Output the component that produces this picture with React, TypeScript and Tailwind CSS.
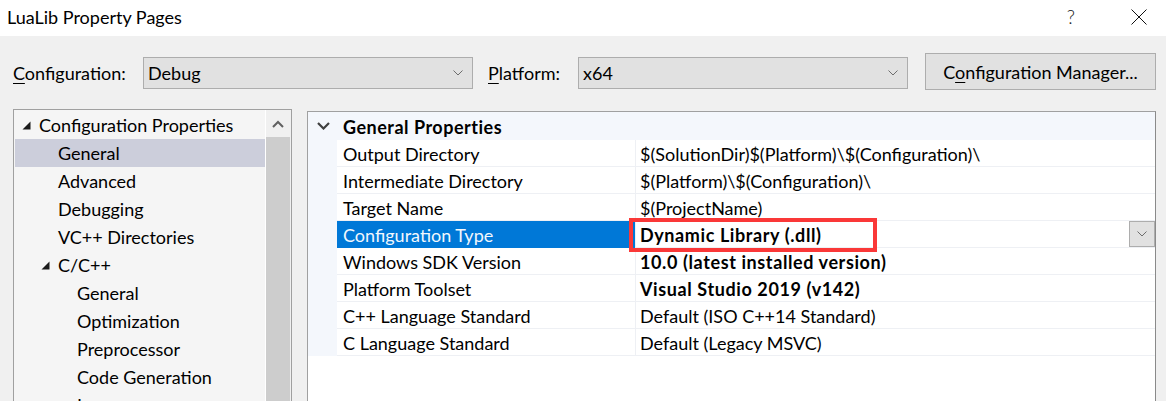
import React from "react";

function SmallChevron() {
  return (
    <svg width="10" height="6" viewBox="0 0 10 6" className="shrink-0">
      <path d="M0.5 0.5 L5 5 L9.5 0.5" fill="none" stroke="#6d6d6d" strokeWidth="1" />
    </svg>
  );
}

function Combo({ value }: { value: string }) {
  return (
    <div className="mt-[4px] w-[330px] h-[32px] bg-[#e1e1e1] border border-[#adadad] flex items-center pl-[4px] pr-[9px]">
      <span className="flex-1">{value}</span>
      <SmallChevron />
    </div>
  );
}

function TreeTriangle() {
  return (
    <svg width="9" height="9" viewBox="0 0 9 9" className="shrink-0">
      <path d="M8.5 0.5 L8.5 8.5 L0.5 8.5 Z" fill="#1a1a1a" />
    </svg>
  );
}

type TreeItem = { label: string; level: number; expand?: boolean; selected?: boolean };

const treeItems: TreeItem[] = [
  { label: "Configuration Properties", level: 0, expand: true },
  { label: "General", level: 1, selected: true },
  { label: "Advanced", level: 1 },
  { label: "Debugging", level: 1 },
  { label: "VC++ Directories", level: 1 },
  { label: "C/C++", level: 1, expand: true },
  { label: "General", level: 2 },
  { label: "Optimization", level: 2 },
  { label: "Preprocessor", level: 2 },
  { label: "Code Generation", level: 2 },
  { label: "Language", level: 2 },
];

function TreeRow({ item }: { item: TreeItem }) {
  const bg = item.selected ? "bg-[#cccedb]" : "";
  if (item.level === 0) {
    return (
      <div className={`h-[28px] shrink-0 flex items-center pl-[7px] ${bg}`}>
        <div className="w-[17px] flex items-center"><TreeTriangle /></div>
        <span>{item.label}</span>
      </div>
    );
  }
  if (item.level === 1 && item.expand) {
    return (
      <div className={`h-[28px] shrink-0 flex items-center pl-[26px] ${bg}`}>
        <div className="w-[17px] flex items-center"><TreeTriangle /></div>
        <span>{item.label}</span>
      </div>
    );
  }
  if (item.level === 1) {
    return (
      <div className={`h-[28px] shrink-0 flex items-center pl-[43px] ${bg}`}>
        <span>{item.label}</span>
      </div>
    );
  }
  return (
    <div className={`h-[28px] shrink-0 flex items-center pl-[62px] ${bg}`}>
      <span>{item.label}</span>
    </div>
  );
}

type Prop = { name: string; value: string; bold?: boolean; selected?: boolean };

const props: Prop[] = [
  { name: "Output Directory", value: "$(SolutionDir)$(Platform)\\$(Configuration)\\" },
  { name: "Intermediate Directory", value: "$(Platform)\\$(Configuration)\\" },
  { name: "Target Name", value: "$(ProjectName)" },
  { name: "Configuration Type", value: "Dynamic Library (.dll)", bold: true, selected: true },
  { name: "Windows SDK Version", value: "10.0 (latest installed version)", bold: true },
  { name: "Platform Toolset", value: "Visual Studio 2019 (v142)", bold: true },
  { name: "C++ Language Standard", value: "Default (ISO C++14 Standard)" },
  { name: "C Language Standard", value: "Default (Legacy MSVC)" },
];

function PropRow({ p }: { p: Prop }) {
  return (
    <div className="h-[27px] shrink-0 flex">
      <div className="w-[29px] bg-[#f4f7fc]" />
      <div
        className={`w-[298px] h-full flex items-center pl-[6px] pt-[1px] border-b ${
          p.selected ? "bg-[#0078d7] text-[#f2f7fd] border-[#0078d7]" : "border-[#eef0f4]"
        }`}
      >
        {p.name}
      </div>
      <div className="flex-1 h-full flex items-center border-l border-b border-[#eef0f4]">
        <span className={`flex-1 pl-[4px] pt-[1px] ${p.bold ? "font-bold tracking-[0.6px]" : ""}`}>{p.value}</span>
        {p.selected && (
          <div className="w-[26px] h-full bg-[#e1e1e1] border border-[#adadad] flex items-center justify-center">
            <SmallChevron />
          </div>
        )}
      </div>
    </div>
  );
}

export default function App() {
  return (
    <div className="w-[1166px] h-[401px] overflow-hidden bg-[#f0f0f0] text-black font-['Lato',sans-serif] text-[18px] leading-none flex flex-col">
      {/* Title bar */}
      <div className="h-[36px] shrink-0 bg-white flex items-center">
        <span className="pl-[7px] pb-[2px]">LuaLib Property Pages</span>
        <div className="ml-auto flex items-center">
          <span className="text-[19px] font-light text-[#222] pb-[3px]">?</span>
          <svg width="16" height="16" viewBox="0 0 16 16" className="ml-[56px] mr-[19px] mb-[3px]">
            <path d="M0.5 0.5 L15.5 15.5 M15.5 0.5 L0.5 15.5" stroke="#111" strokeWidth="1" />
          </svg>
        </div>
      </div>

      {/* Configuration toolbar */}
      <div className="shrink-0 flex items-start pt-[17px]">
        <div className="w-[130px] ml-[13px] mt-[4px] h-[32px] flex items-center">
          <span><span className="underline underline-offset-[3px]">C</span>onfiguration:</span>
        </div>
        <Combo value="Debug" />
        <div className="w-[90px] ml-[15px] mt-[4px] h-[32px] flex items-center">
          <span><span className="underline underline-offset-[3px]">P</span>latform:</span>
        </div>
        <Combo value="x64" />
        <div className="ml-[17px] w-[231px] h-[37px] bg-[#e1e1e1] border border-[#adadad] flex items-center justify-center">
          <span>C<span className="underline underline-offset-[3px]">o</span>nfiguration Manager...</span>
        </div>
      </div>

      {/* Main area */}
      <div className="flex mt-[19px]">
        {/* Tree */}
        <div className="ml-[13px] w-[279px] h-[320px] border border-[#a0a0a0] bg-[#f5f5f5] flex overflow-hidden">
          <div className="w-[251px] pl-[1px] pt-[1px] flex flex-col">
            {treeItems.map((it, i) => (
              <TreeRow key={i} item={it} />
            ))}
          </div>
          <div className="w-[1px] bg-white" />
          <div className="w-[24px] flex flex-col">
            <div className="h-[27px] bg-[#f0f0f0] flex items-center justify-center">
              <svg width="12" height="8" viewBox="0 0 12 8">
                <path d="M1 7 L6 2 L11 7" fill="none" stroke="#606060" strokeWidth="2" />
              </svg>
            </div>
            <div className="flex-1 bg-[#cdcdcd]" />
          </div>
          <div className="w-[1px] bg-[#f0f0f0]" />
        </div>

        {/* Property grid */}
        <div className="relative ml-[15px] mt-[2px] w-[849px] h-[320px] border border-[#a0a0a0] border-r-[#8a8a8a] bg-white flex flex-col">
          <div className="h-[28px] shrink-0 bg-[#f4f7fc] flex items-center">
            <svg width="13" height="8" viewBox="0 0 13 8" className="ml-[9px]">
              <path d="M1 1 L6.5 6.5 L12 1" fill="none" stroke="#404040" strokeWidth="2.2" />
            </svg>
            <span className="ml-[13px] pt-[1px] font-bold tracking-[0.5px]">General Properties</span>
          </div>
          {props.map((p, i) => (
            <PropRow key={i} p={p} />
          ))}
          <div className="absolute left-[321px] top-[106px] w-[248px] h-[34px] border-4 border-[#fa3838]" />
        </div>
      </div>
    </div>
  );
}
